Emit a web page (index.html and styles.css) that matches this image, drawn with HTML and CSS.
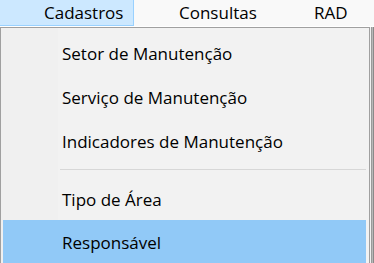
FILE: index.html
```html
<!DOCTYPE html>
<html>
<head>
<meta charset="utf-8">
<link rel="stylesheet" href="styles.css">
</head>
<body>
<div class="menubar">
  <div class="top-item active">Cadastros</div>
  <div class="top-item consultas">Consultas</div>
  <div class="top-item rad">RAD</div>
</div>
<div class="below">
  <div class="dropdown">
    <div class="gutter"></div>
    <div class="items">
      <div class="item">Setor de Manutenção</div>
      <div class="item">Serviço de Manutenção</div>
      <div class="item">Indicadores de Manutenção</div>
      <div class="sep"><div class="sep-line"></div></div>
      <div class="item">Tipo de Área</div>
      <div class="item selected">Responsável</div>
    </div>
  </div>
  <div class="edge"></div>
</div>
</body>
</html>
```
FILE: styles.css
```css
html, body {
  margin: 0;
  padding: 0;
}
body {
  width: 374px;
  height: 263px;
  overflow: hidden;
  background: #ffffff;
  font-family: "Open Sans", "Noto Sans", sans-serif;
  font-size: 17px;
  color: #000000;
}
.menubar {
  display: flex;
  height: 26px;
  background: #f9f9f9;
  align-items: stretch;
}
.top-item {
  display: flex;
  align-items: center;
  box-sizing: border-box;
  height: 26px;
  padding-bottom: 1px;
}
.active {
  width: 134px;
  padding-left: 44px;
  background: #cce8ff;
  border-right: 1px solid #99d1ff;
  border-bottom: 1px solid #99d1ff;
}
.consultas {
  padding-left: 45px;
  width: 180px;
}
.rad {
  padding-left: 0;
}
.below {
  display: flex;
  height: 237px;
  margin-top: 1px;
  background: #f0f0f0;
}
.dropdown {
  position: relative;
  width: 370px;
  box-sizing: border-box;
  border: 1px solid #a0a0a0;
  border-bottom: none;
  background: #f2f2f2;
  padding: 2px 3px 0 2px;
  display: flex;
}
.gutter {
  position: absolute;
  left: 0;
  top: 0;
  bottom: 0;
  width: 57px;
  background: #f0f0f0;
}
.items {
  position: relative;
  flex: 1;
  display: flex;
  flex-direction: column;
}
.item {
  height: 44px;
  display: flex;
  align-items: center;
  padding-left: 59px;
  padding-top: 3px;
  box-sizing: border-box;
}
.selected {
  background: #91c9f7;
  padding-top: 0;
}
.sep {
  height: 14px;
  display: flex;
  align-items: flex-start;
  padding-left: 57px;
}
.sep-line {
  margin-top: 7px;
  height: 1px;
  flex: 1;
  background: #d7d7d7;
}
.edge {
  width: 4px;
  background: linear-gradient(to right, #f0f0f0 0 1px, #9a9a9a 1px 2px, #b8b8b8 2px 3px, #8a8a8a 3px 4px);
}
```
